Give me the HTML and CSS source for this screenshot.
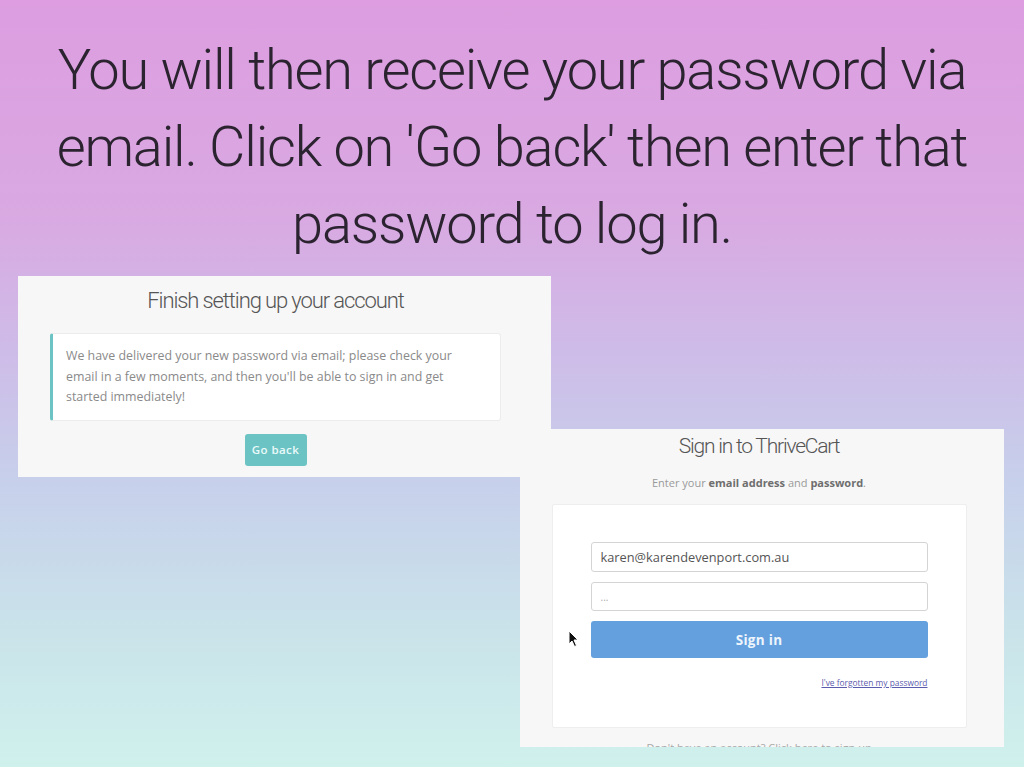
FILE: index.html
```html
<!DOCTYPE html>
<html>
<head>
	<title>Sign in to ThriveCart - how to</title>
	<link rel="stylesheet" href="styles.css">
</head>
<body>
	<h1 class="headline">You will then receive your password via<br>email. Click on 'Go back' then enter that<br>password to log in.</h1>

	<div class="collage">
		<div class="shot shot-finish">
			<h2 class="shot-title">Finish setting up your account</h2>
			<div class="notice">
				We have delivered your new password via email; please check your email in a few moments, and then you'll be able to sign in and get started immediately!
			</div>
			<button type="button" class="btn-teal">Go back</button>
		</div>

		<div class="shot shot-signin">
			<h2 class="shot-title">Sign in to ThriveCart</h2>
			<p class="subtitle">Enter your <b>email address</b> and <b>password</b>.</p>
			<form class="card">
				<input type="text" class="field" value="karen@karendevenport.com.au">
				<input type="text" class="field field-pass" value="...">
				<button type="button" class="btn-blue">Sign in</button>
				<a class="forgot" href="#">I've forgotten my password</a>
			</form>
			<p class="signup">Don't have an account? Click here to sign up</p>

			<svg class="cursor" width="12" height="18" viewBox="0 0 12 18">
				<path d="M1 1 L1 14 L4 11 L6.5 16.5 L8.5 15.6 L6 10 L10 10 Z" fill="#111" stroke="#fff" stroke-width="1"/>
			</svg>
		</div>
	</div>
</body>
</html>
```

FILE: styles.css
```css
html, body {
	margin: 0;
	height: 767px;
	overflow: hidden;
}

body {
	background: linear-gradient(180deg, #dd9de0 0%, #d9a9e2 28%, #cebce8 46%, #c7cfeb 62%, #c9e1ea 80%, #cff1ec 100%);
	font-family: "Open Sans", sans-serif;
	color: #333;
}

.headline {
	margin: 0;
	padding-top: 32px;
	font-family: "Roboto", sans-serif;
	font-weight: 300;
	font-size: 56px;
	line-height: 77px;
	letter-spacing: -1.2px;
	color: #2b2430;
	text-align: center;
	white-space: nowrap;
}

.collage {
	margin-top: 13px;
}

.shot {
	background-color: #f7f7f7;
	box-sizing: border-box;
	position: relative;
	overflow: hidden;
}

.shot > * {
	flex-shrink: 0;
}

.shot-title {
	margin: 0;
	font-family: "Roboto", sans-serif;
	font-weight: 300;
	color: #555;
	text-align: center;
	line-height: 26px;
}

/* left screenshot */
.shot-finish {
	width: 533px;
	height: 201px;
	margin-left: 18px;
	padding: 12px 18px 0 0;
	z-index: 2;
	display: flex;
	flex-direction: column;
	align-items: center;
}

.shot-finish .shot-title {
	font-size: 22px;
	letter-spacing: -1.1px;
}

.notice {
	box-sizing: border-box;
	width: 451px;
	margin-top: 19px;
	padding: 12px 16px 12px 13px;
	background-color: #fff;
	border: 1px solid #ececec;
	border-left: 3px solid #6cc3c3;
	border-radius: 3px;
	font-size: 12.4px;
	line-height: 20.5px;
	color: #8a8a8a;
	text-align: left;
}

.btn-teal {
	margin-top: 13px;
	width: 62px;
	height: 32px;
	padding: 0;
	border: none;
	border-radius: 3px;
	background-color: #6cc3c4;
	color: #eafafa;
	font-family: "Open Sans", sans-serif;
	font-weight: 600;
	font-size: 11.5px;
	letter-spacing: 0.4px;
}

/* right screenshot */
.shot-signin {
	width: 484px;
	height: 318px;
	margin: -48px 0 0 520px;
	padding: 4px 6px 0 0;
	z-index: 1;
	display: flex;
	flex-direction: column;
	align-items: center;
}

.shot-signin .shot-title {
	font-size: 21px;
	letter-spacing: -1.2px;
}

.subtitle {
	margin: 16px 0 0;
	font-size: 11px;
	line-height: 16px;
	color: #9a9a9a;
}

.subtitle b {
	color: #6e6e6e;
}

.card {
	box-sizing: border-box;
	width: 415px;
	height: 224px;
	margin-top: 13px;
	padding: 37px 38px 0;
	background-color: #fff;
	border: 1px solid #eeeeee;
	border-radius: 2px;
	display: flex;
	flex-direction: column;
}

.field {
	box-sizing: border-box;
	width: 100%;
	height: 30px;
	margin: 0 0 10px;
	padding: 0 9px;
	border: 1px solid #d4d4d4;
	border-radius: 3px;
	font-family: "Open Sans", sans-serif;
	font-size: 12.8px;
	color: #555;
	background-color: #fff;
}

.field-pass {
	height: 29px;
	font-size: 10px;
	color: #aaa;
}

.btn-blue {
	width: 100%;
	height: 37px;
	border: none;
	border-radius: 3px;
	background-color: #64a0de;
	color: #eef5fc;
	font-family: "Open Sans", sans-serif;
	font-weight: 700;
	font-size: 13.5px;
	letter-spacing: 0.3px;
}

.forgot {
	align-self: flex-end;
	margin-top: 19px;
	font-size: 8.4px;
	color: #5c5cae;
}

.signup {
	margin: 12px 0 0;
	font-size: 11px;
	line-height: 16px;
	color: #a8a8a8;
}

.cursor {
	position: absolute;
	left: 48px;
	top: 201px;
	filter: blur(0.4px);
}
```
